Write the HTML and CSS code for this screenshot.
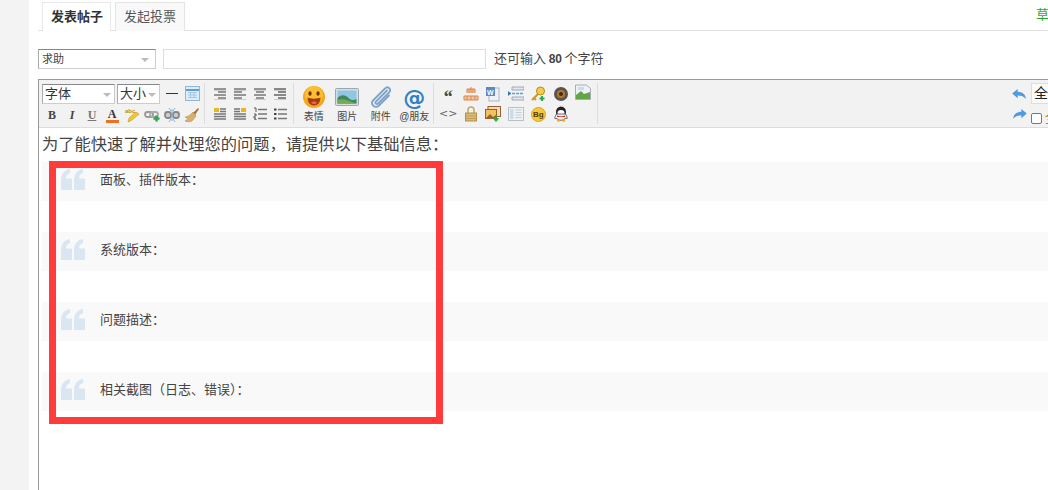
FILE: index.html
```html
<!DOCTYPE html>
<html lang="zh">
<head>
<meta charset="utf-8">
<title>发表帖子</title>
<link rel="stylesheet" href="styles.css">
</head>
<body>
<div class="page">
  <aside class="side"></aside>
  <main class="main">
    <div class="tabs">
      <a class="tab active">发表帖子</a>
      <a class="tab">发起投票</a>
      <span class="draft">草</span>
    </div>
    <div class="titlebar">
      <div class="select">求助<i class="arrow"></i></div>
      <div class="title-input"></div>
      <span class="hint">还可输入 <b>80</b> 个字符</span>
    </div>
    <section class="editor">
      <div class="toolbar">
        <div class="group g1">
          <div class="row1">
            <div class="combo font">字体<i class="arrow"></i></div>
            <div class="combo size">大小<i class="arrow"></i></div>
            <i class="hr-btn"></i>
            <svg class="ic tableic" viewBox="0 0 15 15"><rect x=".5" y=".5" width="14" height="14" fill="#dcecf8" stroke="#8fb8d8"/><path d="M1 4h13" stroke="#5f9fd0" stroke-width="2"/><path d="M3 6.500h9M3 9h9M3 11.500h9M5.500 6v6M9 6v6" stroke="#a9c6dd"/></svg>
          </div>
          <div class="row2">
            <span class="fmt b">B</span>
            <span class="fmt i">I</span>
            <span class="fmt u">U</span>
            <span class="fmt a">A</span>
            <svg class="ic" viewBox="0 0 16 16"><text x="1" y="6" class="abc">abc</text><path d="M4 15l1-4 7-6 3 2-7 6z" fill="#f4c92e" stroke="#b8921a" stroke-width=".6"/></svg>
            <svg class="ic" viewBox="0 0 16 16"><rect x="1" y="5" width="8" height="5" rx="2.500" fill="none" stroke="#999" stroke-width="1.800"/><rect x="6" y="5" width="8" height="5" rx="2.500" fill="none" stroke="#aaa" stroke-width="1.800"/><path d="M12.500 8.500v6M9.500 11.500h6" stroke="#2da84a" stroke-width="2.400"/></svg>
            <svg class="ic" viewBox="0 0 16 16"><rect x="1" y="5" width="6" height="6" rx="2.500" fill="#ccc" stroke="#888" stroke-width="1.800"/><rect x="9" y="5" width="6" height="6" rx="2.500" fill="#ccc" stroke="#888" stroke-width="1.800"/><path d="M5 1l2 3M11 1L9 4M5 15l2-3M11 15l-2-3M8 2v12" stroke="#7fb6e0"/></svg>
            <svg class="ic" viewBox="0 0 16 16"><path d="M9 6l5-5 1 1-4 6z" fill="#a9743f"/><path d="M9 5l3 4-4 5c-2 1-5 1-7 0 2-1 3-2 3-3-1 0-2 0-3-1 2 0 6-2 8-5z" fill="#d9b06b" stroke="#a8803f" stroke-width=".5"/></svg>
          </div>
        </div>
        <div class="group g2">
          <svg class="ic" viewBox="0 0 14 14"><path d="M1 2h12M5 5h8M1 8h12M5 11h8" stroke="#777" stroke-width="1.500"/><path d="M1 3.500h12M1 12.500h12" stroke="#ccc"/></svg>
          <svg class="ic" viewBox="0 0 14 14"><path d="M1 2h12M1 5h8M1 8h12M1 11h8" stroke="#777" stroke-width="1.500"/><path d="M1 3.500h12M1 12.500h12" stroke="#ccc"/></svg>
          <svg class="ic" viewBox="0 0 14 14"><path d="M1 2h12M3 5h8M1 8h12M3 11h8" stroke="#777" stroke-width="1.500"/><path d="M1 3.500h12M1 12.500h12" stroke="#ccc"/></svg>
          <svg class="ic" viewBox="0 0 14 14"><path d="M1 2h12M5 5h8M1 8h12M5 11h8" stroke="#666" stroke-width="1.500"/><path d="M1 3.500h12M1 12.500h12" stroke="#ccc"/></svg>
          <svg class="ic" viewBox="0 0 14 14"><rect x="1" y="1" width="5" height="4" fill="#e8b820"/><path d="M7 2h6M7 4.500h6M1 7h12M1 9.500h12M1 12h12" stroke="#777" stroke-width="1.300"/></svg>
          <svg class="ic" viewBox="0 0 14 14"><rect x="8" y="1" width="5" height="4" fill="#e8b820"/><path d="M1 2h6M1 4.500h6M1 7h12M1 9.500h12M1 12h12" stroke="#777" stroke-width="1.300"/></svg>
          <svg class="ic" viewBox="0 0 14 14"><path d="M5 2.500h9M5 7h9M5 11.500h9" stroke="#777" stroke-width="1.500"/><path d="M1 1h2v4M1 7h2v2H1v2h2M1 12h2v1" fill="none" stroke="#555"/></svg>
          <svg class="ic" viewBox="0 0 14 14"><path d="M5 2.500h9M5 7h9M5 11.500h9" stroke="#777" stroke-width="1.500"/><path d="M1 1.500h2.500v2H1zM1 6h2.500v2H1zM1 10.500h2.500v2H1z" fill="#444"/></svg>
        </div>
        <div class="group g3">
          <div class="big">
            <svg class="bigic" viewBox="0 0 24 24"><circle cx="12" cy="12" r="11" fill="#f4a71c"/><circle cx="12" cy="10" r="9" fill="#ffc93c" opacity=".7"/><ellipse cx="8" cy="8.500" rx="1.600" ry="2.200" fill="#6b3410"/><ellipse cx="16" cy="8.500" rx="1.600" ry="2.200" fill="#6b3410"/><path d="M5.500 12.500c3 1.500 10 1.500 13 0 0 5-3 8-6.500 8s-6.500-3-6.500-8z" fill="#a63a12"/><path d="M9 17.500c1.500-1.500 4.500-1.500 6 0-1.500 2-4.500 2-6 0z" fill="#f0644a"/></svg>
            <span>表情</span>
          </div>
          <div class="big">
            <svg class="bigic" viewBox="0 0 24 24"><rect x=".5" y="3.500" width="23" height="17" rx="1" fill="#d4dde3" stroke="#9aa7b0"/><rect x="2.500" y="5.500" width="19" height="13" fill="#8fc6e2"/><path d="M2.500 13c4-4 8-3 11 0s6 2 8 1v4.500h-19z" fill="#3f8a5a"/><path d="M2.500 15c5-2 9 0 13 1.500l6 2h-19z" fill="#78aa54"/></svg>
            <span>图片</span>
          </div>
          <div class="big">
            <svg class="bigic" viewBox="0 0 24 24"><path d="M18 5.500L7 16.500c-1.500 1.500 .5 3.500 2 2L20 7.500c3-3-1-7-4-4L4.500 15c-4 4 1.500 9.500 5.500 5.500L20 10.500" fill="none" stroke="#7ea4c9" stroke-width="1.800" stroke-linecap="round"/></svg>
            <span>附件</span>
          </div>
          <div class="big">
            <span class="at">@</span>
            <span>@朋友</span>
          </div>
        </div>
        <div class="group g4">
          <span class="quote-btn">“</span>
          <svg class="ic" viewBox="0 0 16 16"><path d="M4 7V3h8v4M1 10h14v4H1z" fill="#f0c8a8" stroke="#d9854a"/><path d="M6 3v4M8 1v6M10 3v4M4 10v4M8 10v4M12 10v4" stroke="#d9854a"/></svg>
          <svg class="ic" viewBox="0 0 16 16"><rect x="4" y="2" width="10" height="13" fill="#eef1f5" stroke="#aab5c2"/><rect x="1" y="1" width="9" height="9" fill="#5c87c9"/><text x="2" y="8.500" class="word">W</text></svg>
          <svg class="ic wide" viewBox="0 0 16 16"><path d="M4 1h12v3H4zM4 11h12v3H4z" fill="#e3e8ee" stroke="#8a9aa8" stroke-width=".8"/><path d="M0 7.500h16" stroke="#5aa0d8" stroke-width="1.500" stroke-dasharray="3 1"/><path d="M0 5v5l3-2.500z" fill="#2a79c0"/></svg>
          <svg class="ic" viewBox="0 0 16 16"><circle cx="10.500" cy="5" r="4" fill="#f2cb4f" stroke="#b8891b"/><path d="M8 8l-6 6M4 12l2 2" stroke="#c79a26" stroke-width="2"/><path d="M12 10v5M9.500 12.500h5" stroke="#2da84a" stroke-width="2"/></svg>
          <svg class="ic" viewBox="0 0 16 16"><circle cx="8" cy="8" r="7" fill="#555"/><circle cx="8" cy="8" r="4" fill="#b8791f"/><circle cx="8" cy="8" r="2" fill="#3d2a10"/></svg>
          <svg class="ic up" viewBox="0 0 16 16"><path d="M.5 1h11l4 3.500v11H.5z" fill="#eef2f4" stroke="#aab"/><path d="M1 11l5-4 3 3 6-2v7H1z" fill="#63a744"/><path d="M3 3h6v3H3z" fill="#c5dcee"/></svg>

          <span class="code-btn">&lt;&gt;</span>
          <svg class="ic" viewBox="0 0 16 16"><path d="M5 7V4c0-4 6-4 6 0v3" fill="none" stroke="#c7a65e" stroke-width="1.500"/><rect x="2.500" y="7" width="11" height="8" fill="#dcb974" stroke="#b08f4a"/><path d="M2.500 10h11M2.500 12.500h11" stroke="#c09e58"/></svg>
          <svg class="ic wide" viewBox="0 0 16 16"><rect x="3" y=".5" width="12.500" height="10" fill="#f0dcb4" stroke="#9c5e2e"/><rect x=".5" y="3.500" width="11" height="9" fill="#f3c260" stroke="#9c5e2e"/><path d="M1 12l4-4 3 3 3-2v3H1z" fill="#a85c2a"/><path d="M11 9v4M8.500 12.500h5l-2.500 3z" fill="#2da84a" stroke="#2da84a"/></svg>
          <svg class="ic wide" viewBox="0 0 16 16"><rect x=".5" y="1.500" width="15" height="13" fill="#eef2f4" stroke="#b5c0c8"/><rect x="2" y="3" width="3.500" height="10" fill="#cfdbe2"/><path d="M7.500 4h6M7.500 6.500h6M7.500 9h6M7.500 11.500h6" stroke="#c3ced5"/></svg>
          <span class="bg-btn">Bg</span>
          <svg class="ic" viewBox="0 0 16 16"><ellipse cx="8" cy="6" rx="5" ry="5.500" fill="#222"/><ellipse cx="8" cy="7" rx="3.500" ry="3" fill="#fff"/><path d="M3.500 8c-2 3-2 5-1 5l1-1c1 3 8 3 9 0l1 1c1 0 1-2-1-5z" fill="#eee" stroke="#333" stroke-width=".7"/><path d="M4 9.500c2 1 6 1 8 0v1.500H4z" fill="#e02828"/><path d="M4 14.500h3M9 14.500h3" stroke="#f0a81c" stroke-width="2"/></svg>
        </div>
        <div class="group g5">
          <div class="history">
            <svg class="ic" viewBox="0 0 16 12"><path d="M6 0L0 5l6 5V7c4 0 7 1 9 4 0-5-4-8-9-8z" fill="#4f9be0"/></svg>
            <svg class="ic" viewBox="0 0 16 12"><path d="M10 0l6 5-6 5V7c-4 0-7 1-9 4 0-5 4-8 9-8z" fill="#4f9be0"/></svg>
          </div>
          <div class="fullscreen">
            <div class="full-btn">全</div>
            <label class="chk"><i class="box"></i><span class="chk-text">全</span></label>
          </div>
        </div>
      </div>
      <div class="content">
        <p class="lead">为了能快速了解并处理您的问题，请提供以下基础信息：</p>
        <div class="quotes">
          <blockquote class="quote"><svg class="mark" viewBox="0 0 24 21"><path d="M0 21V11C0 5 3 1 9 0v4C6 5 5 7 5 9.500h6V21zM13 21V11c0-6 3-10 9-11v4c-3 1-4 3-4 5.500h6V21z"/></svg>面板、插件版本：</blockquote>
          <blockquote class="quote"><svg class="mark" viewBox="0 0 24 21"><path d="M0 21V11C0 5 3 1 9 0v4C6 5 5 7 5 9.500h6V21zM13 21V11c0-6 3-10 9-11v4c-3 1-4 3-4 5.500h6V21z"/></svg>系统版本：</blockquote>
          <blockquote class="quote"><svg class="mark" viewBox="0 0 24 21"><path d="M0 21V11C0 5 3 1 9 0v4C6 5 5 7 5 9.500h6V21zM13 21V11c0-6 3-10 9-11v4c-3 1-4 3-4 5.500h6V21z"/></svg>问题描述：</blockquote>
          <blockquote class="quote"><svg class="mark" viewBox="0 0 24 21"><path d="M0 21V11C0 5 3 1 9 0v4C6 5 5 7 5 9.500h6V21zM13 21V11c0-6 3-10 9-11v4c-3 1-4 3-4 5.500h6V21z"/></svg>相关截图（日志、错误）：</blockquote>
        </div>
        <div class="highlight"></div>
      </div>
    </section>
  </main>
</div>
</body>
</html>
```
FILE: styles.css
```css
* { box-sizing: border-box; }
html, body { margin: 0; height: 100%; overflow: hidden; background: #fff; }
body { font: 13px/1.4 "Liberation Sans", "Noto Sans CJK SC", sans-serif; color: #444; }
.page { display: flex; width: 1048px; height: 490px; overflow: hidden; }
.side { width: 29px; flex: none; background: #f3f3f3; }
.main { flex: 1; min-width: 0; padding-left: 9px; }

.tabs { display: flex; gap: 4px; height: 31px; padding: 2px 0 0 4px; border-bottom: 1px solid #e0e0e0; position: relative; }
.tab { height: 29px; width: 70px; text-align: center; line-height: 27px; border: 1px solid #e4e4e4; border-bottom: 0; background: #f9f9f9; color: #555; }
.tab.active { width: 69px; height: 29px; background: #fff; color: #333; font-weight: 700; border-color: #e8e8e8; padding-left: 1px; }
.draft { position: absolute; left: 998px; top: 5px; color: #1fae2e; line-height: 20px; }

.titlebar { display: flex; align-items: center; margin-top: 18px; height: 20px; }
.select { width: 118px; height: 20px; border: 1px solid #ccc; border-top-color: #888; border-left-color: #aaa; padding-left: 3px; font-size: 11px; line-height: 18px; position: relative; color: #444; }
.arrow { position: absolute; right: 6px; top: 8px; width: 0; height: 0; border: 4px solid transparent; border-top: 4px solid #bbb; border-bottom: 0; }
.title-input { width: 323px; height: 20px; margin-left: 7px; border: 1px solid #ddd; background: #fff; }
.hint { margin-left: 8px; color: #444; word-spacing: -1px; }
.hint b { font-size: 12px; }

.editor { margin-top: 10px; width: 1030px; height: 420px; border-left: 1px solid #999; border-top: 1px solid #999; }
.toolbar { display: flex; height: 48px; padding-top: 3px; background: #f2f2f2; border-bottom: 1px solid #ddd; }
.group { height: 41px; flex: none; }
.g1 { width: 166px; padding-left: 3px; border-right: 1px solid #ddd; }
.row1 { display: flex; align-items: center; height: 21px; }
.combo { height: 20px; background: #fff; border: 1px solid #ccc; border-top-color: #888; border-left-color: #aaa; font-size: 13px; line-height: 18px; padding-left: 2px; position: relative; color: #333; }
.combo .arrow { right: 3px; top: 8px; }
.font { width: 73px; margin-right: 2px; }
.size { width: 43px; }
.hr-btn { width: 12px; height: 1px; margin-left: 6px; background: #333; flex: none; }
.ic { width: 16px; height: 16px; flex: none; display: block; }
.tableic { width: 15px; height: 15px; margin-left: 7px; }
.row2 { display: grid; grid-template-columns: repeat(8, 20px); align-items: center; justify-items: center; height: 20px; margin-top: 1px; }
.fmt { font: 700 12px/16px "Liberation Serif", serif; color: #444; }
.fmt.i { font-style: italic; }
.fmt.u { text-decoration: underline; color: #777; }
.fmt.a { color: #333; border-bottom: 3px solid #f07020; line-height: 12px; width: 13px; text-align: center; }
.abc { font: 700 6px "Liberation Sans", sans-serif; fill: #b9900f; }
.word { font: 700 7px "Liberation Sans", sans-serif; fill: #fff; }

.g2 { display: grid; grid-template-columns: repeat(4, 20px); grid-template-rows: 21px 20px; align-items: center; justify-items: center; width: 89px; padding-left: 5px; border-right: 1px solid #ddd; }
.g2 .ic { width: 14px; height: 14px; }

.g3 { display: flex; width: 140px; padding-left: 3px; border-right: 1px solid #ddd; }
.big { width: 33.500px; display: flex; flex-direction: column; align-items: center; font-size: 10px; line-height: 12px; color: #444; white-space: nowrap; padding-top: 2px; }
.bigic { width: 24px; height: 24px; margin-bottom: 2px; flex: none; display: block; }
.at { height: 24px; margin-bottom: 2px; font: 700 22px/26px "DejaVu Sans", sans-serif; color: #2f7fc4; }

.g4 { display: grid; grid-template-columns: repeat(7, 22.500px); grid-template-rows: 21px 20px; align-items: center; justify-items: center; width: 164px; padding-left: 3px; border-right: 1px solid #ddd; }
.ic.wide { width: 16px; }
.ic.up { margin-top: -4px; }
.quote-btn { font: 700 18px/18px "Liberation Serif", serif; color: #444; height: 12px; }
.code-btn { font: 400 11px/14px "DejaVu Sans", sans-serif; color: #666; grid-column: 1; }
.bg-btn { width: 15px; height: 15px; border-radius: 50%; background: #f5c93c; border: 1px solid #d8a520; font: 700 8px/13px "Liberation Sans", sans-serif; color: #5a3b06; text-align: center; }

.g5 { display: flex; margin-left: 414px; }
.history { width: 16px; display: flex; flex-direction: column; gap: 9px; padding-top: 6px; }
.history .ic { width: 15px; height: 11px; }
.fullscreen { margin-left: 3px; width: 50px; }
.full-btn { width: 50px; height: 21px; background: #fafafa; border: 1px solid #ddd; font-size: 14px; line-height: 19px; padding-left: 2px; color: #222; white-space: nowrap; }
.chk { display: flex; align-items: center; margin-top: 8px; height: 12px; }
.box { width: 11px; height: 11px; flex: none; background: #fff; border: 1px solid #777; border-radius: 2px; }
.chk-text { margin-left: 3px; white-space: nowrap; color: #b8860b; }

.content { position: relative; height: 370px; background: #fff; padding: 5px 0 0 3px; }
.lead { margin: 0 0 6px; font-size: 16.250px; line-height: 23px; color: #444; white-space: nowrap; }
.quotes { display: flex; flex-direction: column; gap: 31.500px; }
.quote { margin: 0; height: 38.500px; display: flex; align-items: center; padding: 0 0 2px 19px; background: #f9f9f9; color: #444; font-size: 13px; line-height: 36px; }
.mark { width: 24px; height: 21px; fill: #dae7f3; margin-right: 15px; margin-top: -2px; flex: none; }
.highlight { position: absolute; left: 10px; top: 33px; width: 394px; height: 263px; border: 7px solid #ff3b3b; }
```
